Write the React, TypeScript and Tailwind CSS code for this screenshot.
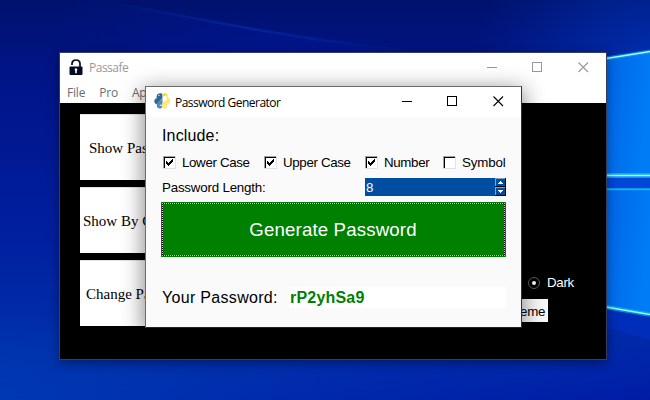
import React from "react";

function Wallpaper() {
  return (
    <svg className="absolute inset-0 h-[400px] w-[650px]" viewBox="0 0 650 400" preserveAspectRatio="none">
      <defs>
        <linearGradient id="base" x1="0" y1="0" x2="0" y2="1">
          <stop offset="0" stopColor="#00126e" />
          <stop offset="0.2" stopColor="#001489" />
          <stop offset="0.6" stopColor="#0020a0" />
          <stop offset="1" stopColor="#0038b0" />
        </linearGradient>
        <linearGradient id="low" x1="0" y1="0" x2="1" y2="0">
          <stop offset="0" stopColor="#0038b2" />
          <stop offset="0.5" stopColor="#0028aa" />
          <stop offset="1" stopColor="#001ca6" />
        </linearGradient>
        <linearGradient id="fade" x1="0" y1="0" x2="0" y2="1">
          <stop offset="0" stopColor="white" stopOpacity="0" />
          <stop offset="1" stopColor="white" />
        </linearGradient>
        <linearGradient id="sweep" x1="0" y1="0" x2="1" y2="0">
          <stop offset="0" stopColor="#0018a0" stopOpacity="0" />
          <stop offset="0.5" stopColor="#0018a0" stopOpacity="0.3" />
          <stop offset="1" stopColor="#0018a0" stopOpacity="0.3" />
        </linearGradient>
        <linearGradient id="arc" x1="0" y1="0" x2="1" y2="0">
          <stop offset="0" stopColor="#0630b4" stopOpacity="0" />
          <stop offset="0.5" stopColor="#0630b4" stopOpacity="0.5" />
          <stop offset="1" stopColor="#0630b4" stopOpacity="0.1" />
        </linearGradient>
        <mask id="lowMask">
          <rect y="310" width="650" height="90" fill="url(#fade)" />
        </mask>
        <radialGradient id="corner" cx="1" cy="0.5" r="0.8">
          <stop offset="0" stopColor="#0036bc" stopOpacity="0.75" />
          <stop offset="1" stopColor="#0030b0" stopOpacity="0" />
        </radialGradient>
        <linearGradient id="pane" x1="0" y1="0" x2="1" y2="0.3">
          <stop offset="0" stopColor="#0062e4" />
          <stop offset="1" stopColor="#007cf6" />
        </linearGradient>
      </defs>
      <rect width="650" height="400" fill="url(#base)" />
      <rect y="310" width="650" height="90" fill="url(#low)" mask="url(#lowMask)" />
      <path d="M60 0H100C230 24 310 40 410 54H60Z" fill="url(#sweep)" />
      <path d="M100 0C230 26 310 40 400 50" stroke="url(#arc)" strokeWidth="2.5" fill="none" />
      <rect x="430" y="-30" width="220" height="170" fill="url(#corner)" />
      <path d="M600 59L650 52V176H600Z" fill="url(#pane)" />
      <path d="M600 188H650V314L600 306Z" fill="url(#pane)" />
      <path d="M600 175H650V190H600Z" fill="#0046d8" />
      <path d="M600 306L650 314V340L600 325Z" fill="#0030c4" opacity="0.6" />
      <g fill="none">
        <path d="M600 59.5L650 51.5" stroke="#12a8ee" strokeWidth="4" opacity="0.6" />
        <path d="M600 59.5L650 51.5" stroke="#9dfff8" strokeWidth="1.5" />
        <path d="M600 175.5H650" stroke="#18baf6" strokeWidth="5" opacity="0.7" />
        <path d="M600 175.5H650" stroke="#a0fff6" strokeWidth="1.7" />
        <path d="M600 189.3H650" stroke="#10b4ec" strokeWidth="2" />
        <path d="M600 306L650 314.5" stroke="#10b0f0" strokeWidth="4.5" opacity="0.7" />
        <path d="M600 306L650 314.5" stroke="#88fff0" strokeWidth="1.7" />
      </g>
    </svg>
  );
}

function Controls() {
  return (
    <svg className="h-[11px] w-[102px] shrink-0" viewBox="0 0 102 11" fill="none" stroke="currentColor">
      <path d="M0 5.5H10" />
      <path d="M45.5 .5H54.5V9.5H45.5Z" shapeRendering="crispEdges" />
      <path d="M91.5 .5L101 10M101 .5L91.5 10" strokeWidth="1.1" />
    </svg>
  );
}

function Lock() {
  return (
    <svg className="mb-[2px] h-[17px] w-[14px] shrink-0" viewBox="0 0 14 17">
      <path d="M3 6V4.8C3 2.6 4.7 1 7 1S11 2.6 11 4.8V8" fill="none" stroke="#020b20" strokeWidth="1.7" />
      <rect x=".5" y="7.5" width="13" height="8.5" rx="1" fill="#020b20" />
      <path d="M7 9.3a1.4 1.4 0 0 1 .8 2.5v2.4H6.2v-2.4A1.4 1.4 0 0 1 7 9.3Z" fill="white" />
    </svg>
  );
}

function PythonLogo() {
  return (
    <svg className="h-4 w-4 shrink-0" viewBox="0 0 16 16">
      <path d="M8.1.6v4.9C7.7 7.5 4 8.2 3.2 9.3c-.8 1 .1 1.5-.3 3.8-.1 1.7 1.6 2.7 3.6 2.4 1.5-.2 1.6-1.8 1.6-2.8H5.8v-1h3" fill="#4b8bbe" />
      <path d="M2.6 3.5C2.8.9 5.2-.1 7.8.5c1 .7.6 3.3.4 5L5 8.4c-1.5.8-2 2-2.6 3C.5 10.5.1 8.7.5 7c.4-1.3 1.5-1.6 2.1-1.6Z" fill="#306998" />
      <path d="M8.6.8c1.9-1 4.5-.4 4.9 1.2v2.8c1.9 0 2.4 2 2.1 4-.2 2.2-1.5 2.9-3.1 2.7v1.2c1 .2.8 2.2-.9 2.7-2.1.6-3.4-.3-3.4-1.8v-3c0-2 3.9-1.9 4.5-3.6.4-1.3 0-3.1-.3-4.6L9.9 3.6H8.4Z" fill="#ffd43b" />
      <path d="M8.2 11c0-1.9 3.7-1.8 4.6-3.8l.5-2.3c1.8 0 2.5 1.4 2.3 3.9-.1 1.9-1.5 2.8-3.1 2.7v1.2c1 .2.8 2.2-.9 2.7-2.1.6-3.4-.3-3.4-1.8Z" fill="#ffe873" />
      <circle cx="4.9" cy="2.4" r=".6" fill="white" />
      <circle cx="10.6" cy="13.7" r=".6" fill="white" />
    </svg>
  );
}

function CheckBox({ checked, label, width, tracking }: { checked: boolean; label: string; width: string; tracking: string }) {
  return (
    <div className={`flex h-4 shrink-0 items-center whitespace-nowrap text-[13.33px] leading-4 ${width}`}>
      <svg className="mb-px mr-[6px] h-[13px] w-[13px] shrink-0" viewBox="0 0 13 13" shapeRendering="crispEdges">
        <rect width="13" height="13" fill="#e3e3e3" />
        <rect width="12" height="12" fill="#a0a0a0" />
        <rect x="1" y="1" width="11" height="11" fill="black" />
        <rect x="2" y="2" width="10" height="10" fill="white" />
        {checked && <path d="M3 5h1v1h1v1h1V6h1V5h1V4h1V3h1v3H9v1H8v1H7v1H6v1H5V9H4V8H3Z" fill="black" />}
      </svg>
      <span className={tracking}>{label}</span>
    </div>
  );
}

function MainWindow() {
  return (
    <section className="absolute left-[59px] top-[52px] flex h-[308px] w-[548px] flex-col overflow-hidden border border-[#343d62] bg-black shadow-[0_3px_10px_rgba(0,0,0,0.4)]">
      <header className="flex h-[30px] shrink-0 items-center bg-white pl-[9px] pr-[17px] text-[#999999]">
        <Lock />
        <span className="ml-[6px] flex-1 font-['Open_Sans',sans-serif] text-[12px] leading-4 tracking-[-0.5px]">Passafe</span>
        <div className="mb-[2px] flex">
          <Controls />
        </div>
      </header>
      <nav className="flex h-5 shrink-0 gap-[14px] bg-white pl-[7px] font-['Open_Sans',sans-serif] text-[12px] leading-5 tracking-[-0.2px] text-[#6d6d6d]">
        <span>File</span>
        <span>Pro</span>
        <span>Ap</span>
      </nav>
      <main className="flex flex-1 justify-between pl-5 pr-[27px] pt-[11px]">
        <div className="flex w-[80px] flex-col gap-[7px] font-['Liberation_Serif',serif] text-[15px] text-black">
          <button className="h-[66px] whitespace-nowrap border-t border-[#e3e3e3] bg-white pl-[9px] pt-[2px] text-left">Show Pas</button>
          <button className="h-[66px] whitespace-nowrap border-t border-[#e3e3e3] bg-white pl-[3px] pt-[2px] text-left">Show By C</button>
          <button className="h-[66px] whitespace-nowrap border-t border-[#e3e3e3] bg-white pl-[6px] pt-[2px] text-left">Change Pa</button>
        </div>
        <div className="flex w-[105px] flex-col pt-[161px] text-[13.33px] text-white">
          <div className="flex h-4 items-center pl-[54px] leading-4">
            <svg className="mb-px mr-[7px] h-3 w-3 shrink-0" viewBox="0 0 12 12">
              <circle cx="6" cy="6" r="5.5" fill="none" stroke="#777" strokeWidth=".8" />
              <circle cx="6" cy="6" r="2" fill="white" />
            </svg>
            <span className="tracking-[-0.3px]">Dark</span>
          </div>
          <button className="ml-[46px] mt-[8px] h-[23px] w-7 whitespace-nowrap bg-[#f9f9f9] pr-[3px] pt-[2px] text-right text-[13.33px] leading-[21px] tracking-[-0.2px] text-black">eme</button>
        </div>
      </main>
    </section>
  );
}

function SpinBox() {
  return (
    <div className="-mr-px flex h-[18px] w-[141px] shrink-0 bg-[#004ea1] text-white">
      <span className="flex-1 pl-px text-[13.33px] leading-[19px]">8</span>
      <svg className="h-[18px] w-[11px]" viewBox="0 0 11 18" shapeRendering="crispEdges">
        <rect width="11" height="18" fill="black" />
        <path d="M0 0H10V8H0ZM0 9H10V17H0Z" fill="#7aa5d5" />
        <path d="M1 1H10V8H1ZM1 10H10V17H1Z" fill="#004ea1" />
        <path d="M5 3h1v1h1v1h1v1H3V5h1V4h1ZM3 12h5v1H7v1H6v1H5v-1H4v-1H3Z" fill="white" />
      </svg>
    </div>
  );
}

function FocusRing() {
  return (
    <svg className="absolute left-px top-px h-[53px] w-[343px]" viewBox="0 0 343 53" shapeRendering="crispEdges" fill="none">
      <rect x=".5" y=".5" width="342" height="52" stroke="black" />
      <path d="M0 .5H343M0 52.5H343M.5 0V53M342.5 0V53" stroke="#ff9eff" strokeDasharray="1 1" />
    </svg>
  );
}

function PasswordDialog() {
  return (
    <section className="absolute left-[145px] top-[86px] h-[242px] w-[377px] border border-[#6b6b6b] border-b-[#252525] border-r-[#333333] bg-[#fafafa] text-black shadow-[0_5px_20px_2px_rgba(0,0,0,0.45)]">
      <header className="flex h-[30px] items-center bg-white pl-2 pr-[17px]">
        <div className="mb-[2px] flex">
          <PythonLogo />
        </div>
        <span className="ml-[5px] flex-1 pt-px font-['Open_Sans',sans-serif] text-[12px] leading-4 tracking-[-0.52px]">Password Generator</span>
        <div className="mb-px flex">
          <Controls />
        </div>
      </header>
      <div className="px-4 pt-[9px]">
        <div className="h-5 text-[16px] leading-5 tracking-[0.15px]">Include:</div>
        <div className="mt-[9px] flex pl-px">
          <CheckBox checked label="Lower Case" width="w-[101px]" tracking="tracking-[-0.35px]" />
          <CheckBox checked label="Upper Case" width="w-[101px]" tracking="tracking-[-0.35px]" />
          <CheckBox checked label="Number" width="w-[78px]" tracking="tracking-[-0.35px]" />
          <CheckBox checked={false} label="Symbol" width="w-[63px]" tracking="tracking-[-0.15px]" />
        </div>
        <div className="mt-[7px] flex h-[18px] items-center justify-between">
          <span className="pt-px text-[13.33px] leading-4 tracking-[-0.2px]">Password Length:</span>
          <SpinBox />
        </div>
        <button className="relative -ml-px mt-[6px] flex h-[55px] w-[345px] items-center justify-center bg-[#008000] text-[18.67px] text-white">
          <FocusRing />
          <span className="whitespace-nowrap pr-px tracking-[0.15px]">Generate Password</span>
        </button>
        <div className="-mr-px mt-[30px] flex h-[21px] items-center">
          <span className="w-[127px] whitespace-nowrap text-[16px] leading-5 tracking-[0.31px]">Your Password:</span>
          <strong className="h-[21px] flex-1 bg-white pl-px text-[16px] leading-[21px] tracking-[0.2px] text-[#008000]">rP2yhSa9</strong>
        </div>
      </div>
    </section>
  );
}

export default function App() {
  return (
    <div className="relative h-[400px] w-[650px] overflow-hidden font-['Liberation_Sans',Arial,sans-serif]">
      <Wallpaper />
      <MainWindow />
      <PasswordDialog />
    </div>
  );
}
